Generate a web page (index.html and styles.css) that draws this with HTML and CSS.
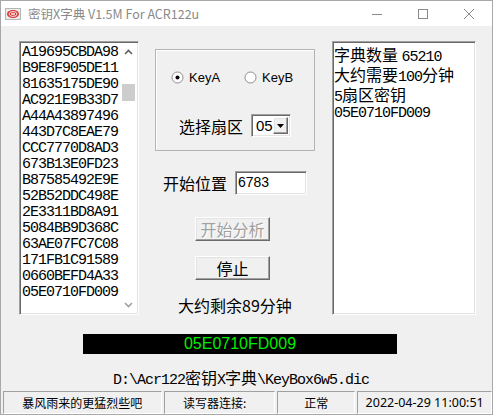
FILE: index.html
```html
<!DOCTYPE html>
<html>
<head>
  <title>密钥X字典 V1.5M For ACR122u</title>
  <meta charset="UTF-8">
  <link rel="stylesheet" href="styles.css">
</head>
<body>
  <div class="window">
    <div class="titlebar">
      <span class="app-icon">
        <svg width="16" height="12" viewBox="0 0 16 12">
          <rect x="0.5" y="0.5" width="15" height="11" fill="#ececec" stroke="#b5b5b5"/>
          <ellipse cx="8" cy="6" rx="6" ry="4" fill="#d9322c"/>
          <ellipse cx="8" cy="6" rx="4" ry="2.4" fill="none" stroke="#fff" stroke-width="0.9"/>
          <rect x="6" y="5.3" width="4" height="1.4" fill="#fff"/>
        </svg>
      </span>
      <span class="title">密钥X字典 V1.5M For ACR122u</span>
      <div class="caption-buttons">
        <span class="cap-btn">
          <svg width="10" height="10" viewBox="0 0 10 10"><line x1="0" y1="5.5" x2="10" y2="5.5" stroke="#8a8a8a"/></svg>
        </span>
        <span class="cap-btn">
          <svg width="10" height="10" viewBox="0 0 10 10"><rect x="0.5" y="0.5" width="9" height="9" fill="none" stroke="#8a8a8a"/></svg>
        </span>
        <span class="cap-btn">
          <svg width="10" height="10" viewBox="0 0 10 10"><path d="M0 0 L10 10 M10 0 L0 10" stroke="#8a8a8a" stroke-width="1"/></svg>
        </span>
      </div>
    </div>

    <div class="client">
      <div class="main">
        <div class="listbox sunken">
          <ul class="keys sb">
            <li>A19695CBDA98</li>
            <li>B9E8F905DE11</li>
            <li>81635175DE90</li>
            <li>AC921E9B33D7</li>
            <li>A44A43897496</li>
            <li>443D7C8EAE79</li>
            <li>CCC7770D8AD3</li>
            <li>673B13E0FD23</li>
            <li>B87585492E9E</li>
            <li>52B52DDC498E</li>
            <li>2E3311BD8A91</li>
            <li>5084BB9D368C</li>
            <li>63AE07FC7C08</li>
            <li>171FB1C91589</li>
            <li>0660BEFD4A33</li>
            <li>05E0710FD009</li>
          </ul>
          <div class="scrollbar">
            <span class="arrow">
              <svg width="9" height="6" viewBox="0 0 9 6"><polyline points="1,5 4.5,1.5 8,5" fill="none" stroke="#606060" stroke-width="1.6"/></svg>
            </span>
            <span class="thumb"></span>
            <span class="arrow arrow-down">
              <svg width="9" height="6" viewBox="0 0 9 6"><polyline points="1,1 4.5,4.5 8,1" fill="none" stroke="#a0a0a0" stroke-width="1.6"/></svg>
            </span>
          </div>
        </div>

        <div class="controls">
          <div class="group">
            <div class="radio-row">
              <label class="radio">
                <svg width="13" height="13" viewBox="0 0 13 13">
                  <circle cx="6.5" cy="6.5" r="5.5" fill="#fff" stroke="#8c8c8c"/>
                  <circle cx="6.5" cy="6.5" r="2" fill="#000"/>
                </svg>
                <span>KeyA</span>
              </label>
              <label class="radio radio-b">
                <svg width="13" height="13" viewBox="0 0 13 13">
                  <circle cx="6.5" cy="6.5" r="5.5" fill="#fff" stroke="#8c8c8c"/>
                </svg>
                <span>KeyB</span>
              </label>
            </div>
            <div class="sector-row">
              <span class="label">选择扇区</span>
              <div class="combo sunken">
                <span class="combo-val">05</span>
                <span class="combo-btn raised">
                  <svg width="7" height="4" viewBox="0 0 7 4"><polygon points="0,0 7,0 3.5,4" fill="#000"/></svg>
                </span>
              </div>
            </div>
          </div>

          <div class="start-row">
            <span class="label">开始位置</span>
            <span class="textbox sunken">6783</span>
          </div>

          <button class="btn raised btn-first" disabled>开始分析</button>
          <button class="btn raised btn-stop">停止</button>

          <div class="remaining">大约剩余89分钟</div>
        </div>

        <div class="log sunken">
          <div>字典数量 <span class="sb">65210</span></div>
          <div>大约需要<span class="sb">100</span>分钟</div>
          <div><span class="sb">5</span>扇区密钥</div>
          <div class="sb">05E0710FD009</div>
        </div>
      </div>

      <div class="display">05E0710FD009</div>

      <div class="path"><span class="sb">D:\Acr122</span>密钥<span class="sb">X</span>字典<span class="sb">\KeyBox6w5.dic</span></div>

      <div class="statusbar">
        <span class="cell cell-msg">暴风雨来的更猛烈些吧</span>
        <span class="cell cell-reader">读写器连接:</span>
        <span class="cell cell-state">正常</span>
        <span class="cell cell-time">2022-04-29 11:00:51</span>
      </div>
    </div>
  </div>
</body>
</html>
```

FILE: styles.css
```css
* {
  box-sizing: border-box;
}

body {
  margin: 0;
  background: #fff;
  font-family: "Noto Sans CJK SC", sans-serif;
  color: #000;
}

.window {
  width: 493px;
  height: 415px;
  border: 1px solid #a8a8a8;
  background: #f0f0f0;
  display: flex;
  flex-direction: column;
}

/* title bar */
.titlebar {
  height: 25px;
  background: #fff;
  display: flex;
  align-items: center;
}

.app-icon {
  display: flex;
  margin-left: 4px;
}

.title {
  margin-left: 7px;
  font-size: 12.5px;
  color: #8a8a8a;
}

.caption-buttons {
  display: flex;
  margin-left: auto;
}

.cap-btn {
  width: 46px;
  height: 25px;
  display: flex;
  align-items: center;
  justify-content: center;
}

/* 3d borders */
.sunken {
  border: 1px solid;
  border-color: #a0a0a0 #fff #fff #a0a0a0;
  box-shadow: inset 1px 1px #696969, inset -1px -1px #e3e3e3;
  background: #fff;
}

.raised {
  border: 1px solid;
  border-color: #fff #696969 #696969 #fff;
  box-shadow: inset -1px -1px #a0a0a0, inset 1px 1px #e3e3e3;
  background: #f0f0f0;
}

.sb {
  font-family: "Liberation Mono", monospace;
  font-size: 15px;
  letter-spacing: -1px;
}

/* client area */
.client {
  flex: 1;
  display: flex;
  flex-direction: column;
}

.main {
  display: flex;
  height: 274px;
  margin-top: 15px;
  margin-left: 18px;
}

.listbox {
  width: 120px;
  display: flex;
  padding: 1px;
}

.keys {
  flex: 1;
  margin: 0;
  padding: 2px 0 0 1px;
  list-style: none;
  line-height: 16px;
}

.scrollbar {
  width: 17px;
  display: flex;
  flex-direction: column;
  align-items: center;
}

.arrow {
  height: 17px;
  display: flex;
  align-items: center;
  justify-content: center;
}

.arrow-down {
  margin-top: auto;
}

.thumb {
  width: 13px;
  height: 17px;
  margin-top: 24px;
  background: #cdcdcd;
}

/* middle column */
.controls {
  width: 160px;
  margin-left: 16px;
  display: flex;
  flex-direction: column;
}

.group {
  height: 104px;
  margin-top: 8px;
  border: 1px solid #b4b4b4;
  box-shadow: inset 1px 1px #fff;
  padding-top: 19px;
}

.radio-row {
  display: flex;
  height: 16px;
  padding-left: 15px;
  align-items: center;
}

.radio {
  display: flex;
  align-items: center;
  gap: 5px;
  font-family: "Liberation Sans", sans-serif;
  font-size: 13px;
}

.radio-b {
  margin-left: 24px;
}

.sector-row {
  display: flex;
  align-items: center;
  margin-top: 29px;
  padding-left: 23px;
}

.label {
  width: 64px;
  font-size: 16px;
  line-height: 20px;
}

.combo {
  display: flex;
  width: 40px;
  height: 23px;
  margin-left: 8px;
  padding: 2px;
}

.combo-val {
  flex: 1;
  padding-left: 2px;
  font-family: "Liberation Sans", sans-serif;
  font-size: 15px;
  line-height: 18px;
}

.combo-btn {
  width: 16px;
  display: flex;
  align-items: center;
  justify-content: center;
}

.start-row {
  display: flex;
  align-items: center;
  height: 24px;
  margin-top: 20px;
  padding-left: 8px;
}

.textbox {
  width: 72px;
  height: 24px;
  margin-left: 8px;
  padding-left: 2px;
  font-family: "Liberation Sans", sans-serif;
  font-size: 14px;
  line-height: 21px;
}

.btn {
  width: 75px;
  height: 24px;
  margin-left: 40px;
  padding: 0;
  font-family: "Noto Sans CJK SC", sans-serif;
  font-size: 16px;
  line-height: 20px;
  color: #000;
}

.btn-first {
  margin-top: 22px;
}

.btn:disabled {
  color: #a0a0a0;
  text-shadow: 1px 1px #fff;
}

.btn-stop {
  height: 25px;
  margin-top: 15px;
}

.remaining {
  margin-top: 15px;
  padding-left: 23px;
  font-size: 16px;
  line-height: 20px;
}

/* right log box */
.log {
  width: 144px;
  margin-left: 17px;
  padding: 4px 0 0 1px;
  font-size: 16px;
  line-height: 16px;
}

/* led display */
.display {
  width: 314px;
  height: 20px;
  margin-top: 19px;
  margin-left: 82px;
  background: #000;
  color: #00ee00;
  font-family: "Liberation Sans", sans-serif;
  font-size: 16px;
  line-height: 20px;
  text-align: center;
}

.path {
  margin-top: 14px;
  margin-left: 112px;
  font-size: 16px;
  line-height: 18px;
}

/* status bar */
.statusbar {
  display: flex;
  gap: 2px;
  height: 23px;
  margin-top: auto;
  padding-left: 2px;
}

.cell {
  border: 1px solid;
  border-color: #a0a0a0 #fff #fff #a0a0a0;
  font-size: 12px;
  line-height: 21px;
  text-align: center;
}

.cell-msg {
  width: 159px;
}

.cell-reader {
  width: 112px;
  padding-right: 10px;
}

.cell-state {
  width: 78px;
}

.cell-time {
  width: 135px;
  font-family: "Noto Sans", sans-serif;
  font-size: 12.5px;
}
```
